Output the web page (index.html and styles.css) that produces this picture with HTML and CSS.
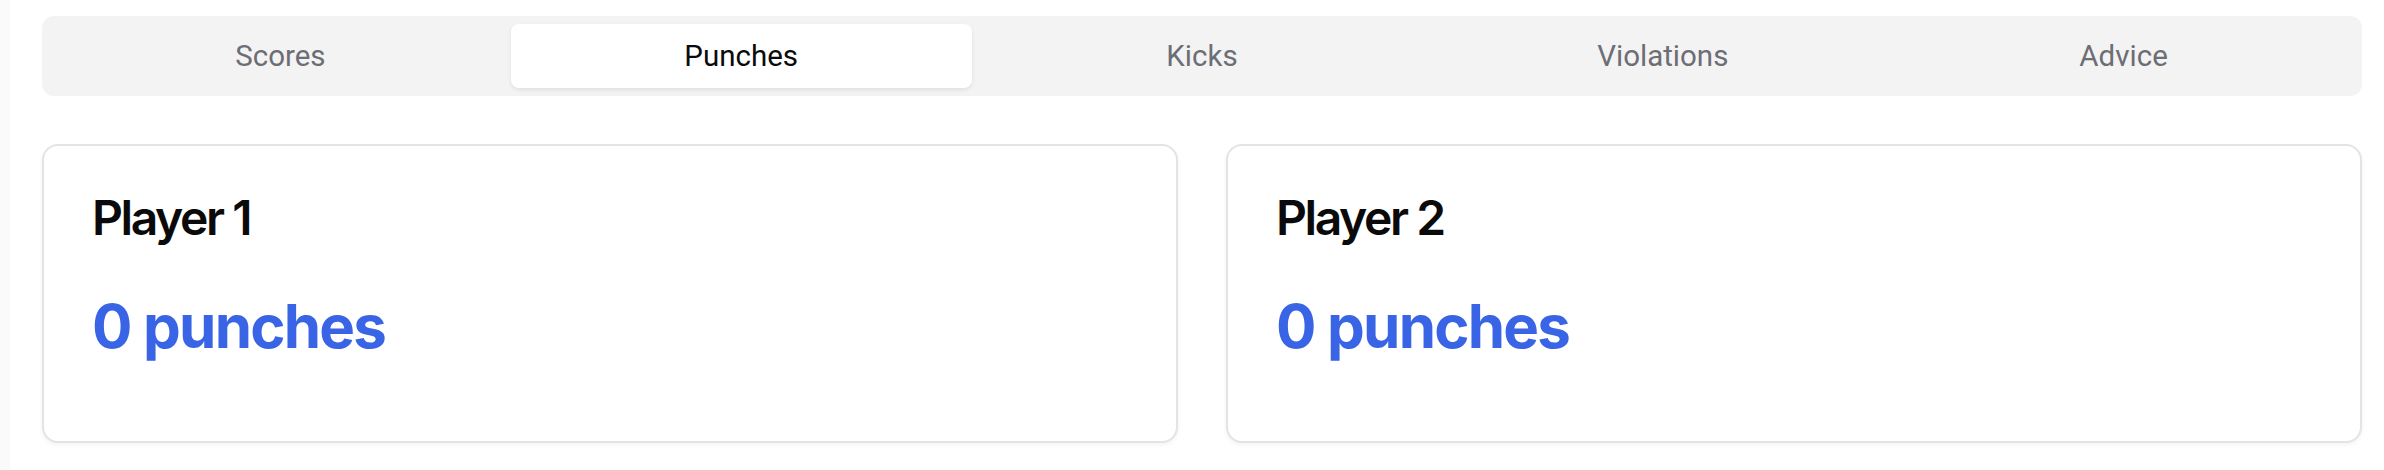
FILE: index.html
```html
<!DOCTYPE html>
<html lang="en">
<head>
<meta charset="utf-8">
<title>Punches</title>
<link rel="stylesheet" href="styles.css">
</head>
<body>
<div class="page">
  <div class="strip"></div>
  <main class="content">
    <nav class="tabs">
      <div class="tab">Scores</div>
      <div class="tab active">Punches</div>
      <div class="tab">Kicks</div>
      <div class="tab">Violations</div>
      <div class="tab">Advice</div>
    </nav>
    <section class="cards">
      <div class="card">
        <h2 class="card-title">Player 1</h2>
        <p class="card-value">0 punches</p>
      </div>
      <div class="card">
        <h2 class="card-title">Player 2</h2>
        <p class="card-value">0 punches</p>
      </div>
    </section>
  </main>
</div>
</body>
</html>
```

FILE: styles.css
```css
* { box-sizing: border-box; }

html, body {
  margin: 0;
  padding: 0;
  background: #ffffff;
  height: 100%;
}

.page {
  display: flex;
  min-height: 470px;
}

.strip {
  width: 10px;
  flex: 0 0 10px;
  background: #fafafa;
}

.content {
  flex: 1;
  padding: 16px 22px 0 32px;
  display: flex;
  flex-direction: column;
  gap: 48px;
}

.tabs {
  display: grid;
  grid-template-columns: repeat(5, 1fr);
  height: 80px;
  padding: 8px;
  background: #f3f3f3;
  border-radius: 12px;
}

.tab {
  display: flex;
  align-items: center;
  justify-content: center;
  font-family: Roboto, "Liberation Sans", sans-serif;
  font-size: 29.5px;
  font-weight: 400;
  color: #6d6d75;
  border-radius: 8px;
}

.tab.active {
  background: #ffffff;
  color: #0a0a0a;
  box-shadow: 0 2px 4px rgba(0, 0, 0, 0.08);
}

.cards {
  display: grid;
  grid-template-columns: 1fr 1fr;
  gap: 48px;
}

.card {
  border: 2px solid #e4e4e4;
  border-radius: 16px;
  background: #ffffff;
  box-shadow: 0 2px 4px rgba(0, 0, 0, 0.05);
  padding: 48px 48px 79px;
  font-family: Inter, "Noto Sans", sans-serif;
}

.card-title {
  margin: 0 0 48px;
  font-size: 48px;
  line-height: 48px;
  font-weight: 600;
  letter-spacing: -2.4px;
  color: #0a0a0a;
}

.card-value {
  margin: 0;
  font-size: 60px;
  line-height: 72px;
  font-weight: 700;
  letter-spacing: -1.8px;
  color: #3864e5;
}
```
